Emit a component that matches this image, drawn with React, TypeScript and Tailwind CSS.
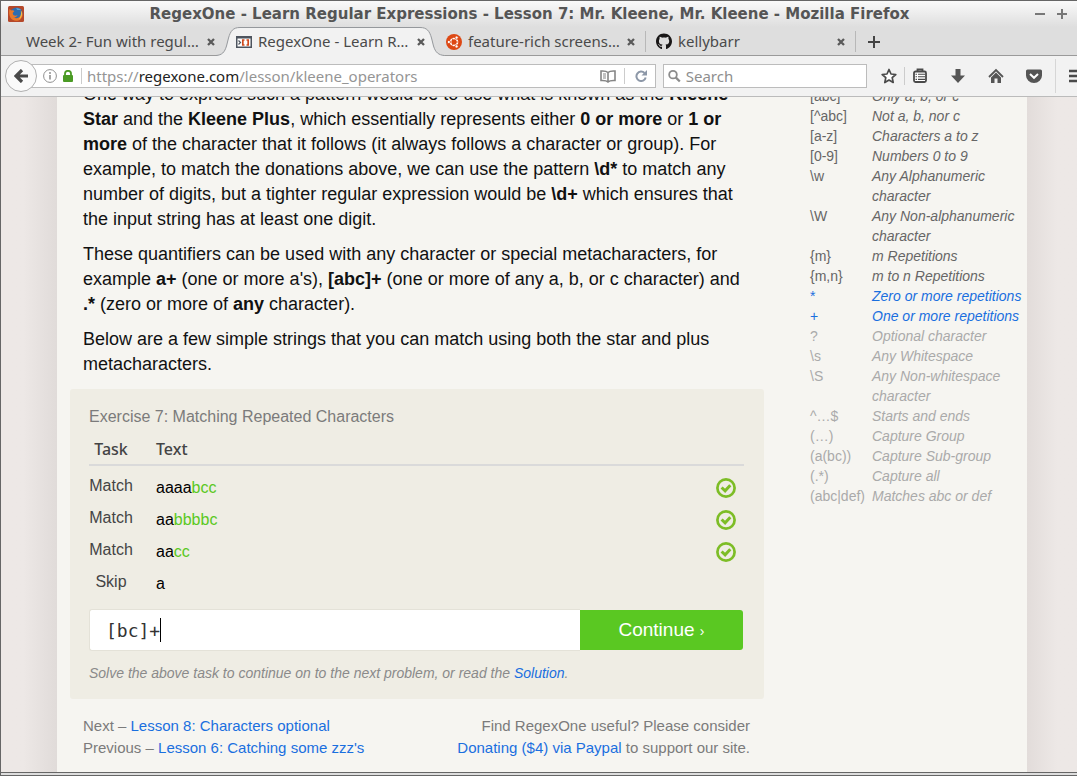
import React from "react";
import { FaGithub } from "react-icons/fa";

const UI_FONT = "font-['Noto_Sans',sans-serif]";

function FirefoxIcon() {
  return (
    <svg width="16" height="16" viewBox="0 0 16 16" aria-hidden="true">
      <rect width="16" height="16" rx="1.5" fill="#b5482a" />
      <circle cx="8.5" cy="7.5" r="6" fill="#2d6db0" />
      <path d="M8 2.5c2-.8 4 0 5 1.5-1.500-.3-2.500.4-3.500-.1z" fill="#58a6d8" />
      <path
        d="M1.500 3c.8.300 1.300.900 1.600 1.500 1.200-.5 2.400-.3 3.200.500-.3 1.200-1.800 1.200-1.500 2.800.3 2 3 2.400 4.800 1.300-1 2.600-3.200 2.500-4.400 2 2 1.800 6.200 1.300 7.600-1.900.6-1.700.5-3.200 0-4.700C15.500 7 15 11 12.500 13.200 9 16 4 14.800 2.200 11.200 1 8.800.8 5.500 1.500 3z"
        fill="#e9792a"
      />
      <path d="M12.800 4.500c2.200 3 1.200 7-1.800 9 1.500-2.500 2.500-5 1.800-9z" fill="#f6c04a" />
    </svg>
  );
}

function RegexOneIcon() {
  return (
    <svg width="16" height="12" viewBox="0 0 16 12" aria-hidden="true">
      <rect x="0.75" y="0.75" width="14.5" height="10.5" fill="#fff" stroke="#4d545e" strokeWidth="1.500" />
      <rect width="16" height="2.500" fill="#4d545e" />
      <path d="M2.500 4.500l2 2-2 2" fill="none" stroke="#4d545e" strokeWidth="1.200" />
      <path d="M8.500 4H6.800v5h1.700M10.500 4h1.700v5h-1.700" fill="none" stroke="#d04a1c" strokeWidth="1.700" />
    </svg>
  );
}

function UbuntuIcon() {
  return (
    <svg width="16" height="16" viewBox="0 0 16 16" aria-hidden="true">
      <circle cx="8" cy="8" r="8" fill="#dd4814" />
      <circle cx="8" cy="8" r="3.500" fill="none" stroke="#fff" strokeWidth="1.700" />
      <g stroke="#dd4814" strokeWidth="0.800" fill="#fff">
        <circle cx="2.900" cy="8" r="1.600" />
        <circle cx="10.600" cy="3.600" r="1.600" />
        <circle cx="10.600" cy="12.400" r="1.600" />
      </g>
      <path d="M9.600 8h3M7.200 6.600l-1.500-2.600M7.200 9.400l-1.500 2.600" stroke="#dd4814" strokeWidth="0.800" />
    </svg>
  );
}

function CloseIcon() {
  return (
    <svg width="10" height="10" viewBox="0 0 10 10" aria-hidden="true">
      <path d="M2 2l6 6M8 2l-6 6" stroke="#5a5a5a" strokeWidth="2.300" />
    </svg>
  );
}

function CheckIcon() {
  return (
    <svg width="20" height="20" viewBox="0 0 20 20" role="img" aria-label="Passed">
      <circle cx="10" cy="10" r="8.600" fill="none" stroke="#7dbd26" strokeWidth="2.700" />
      <path d="M5.600 9.500l3.500 3.300 5.200-5.500" fill="none" stroke="#7dbd26" strokeWidth="3" />
    </svg>
  );
}

function Tab({
  label,
  icon,
  active,
  divider,
}: {
  label: string;
  icon?: React.ReactNode;
  active?: boolean;
  divider?: boolean;
}) {
  return (
    <div
      role="tab"
      aria-selected={!!active}
      className={
        active
          ? "relative z-10 flex h-[29px] w-[210px] shrink-0 items-center px-[10px]"
          : "relative flex h-[29px] w-[210px] shrink-0 items-center px-[10px]"
      }
    >
      {active && (
        <svg className="absolute -left-[10px] top-0" width="232" height="29" viewBox="0 0 232 29" aria-hidden="true">
          <path
            d="M0 28.500C6 28 8.500 25.500 10.500 19L12.500 11C14.500 4 17 .5 24 .5H204c7 0 9.500 3.500 11.500 10.500l2 8c2 6.500 5 9 11 9.500V29H0z"
            fill="#f2f2f2"
          />
          <path
            d="M0 28.500C6 28 8.500 25.500 10.500 19L12.500 11C14.500 4 17 .5 24 .5H204c7 0 9.500 3.500 11.500 10.500l2 8c2 6.500 5 9 11 9.500"
            fill="none"
            stroke="#95989c"
          />
        </svg>
      )}
      {icon && <span className="relative mr-[6px] flex w-4 shrink-0 justify-center">{icon}</span>}
      <span className="relative flex-1 whitespace-nowrap text-[15px] text-[#4a4a4a]">{label}</span>
      <button aria-label={"Close " + label} className="relative">
        <CloseIcon />
      </button>
      {divider && <span className="absolute right-0 top-[4px] h-[21px] w-px bg-[#b8b8b8]" />}
    </div>
  );
}

function BrowserChrome() {
  return (
    <header className={"shrink-0 " + UI_FONT}>
      <div className="flex h-[26px] items-center bg-linear-to-b from-[#fafafa] to-[#dedede] pl-[7px] pr-[10px]">
        <FirefoxIcon />
        <h1 className="flex-1 whitespace-nowrap text-center font-['DejaVu_Sans',sans-serif] text-[15px] font-bold text-[#555]">
          RegexOne - Learn Regular Expressions - Lesson 7: Mr. Kleene, Mr. Kleene - Mozilla Firefox
        </h1>
        <div className="flex gap-3">
          <button aria-label="Minimize">
            <svg width="10" height="10" viewBox="0 0 10 10" aria-hidden="true">
              <path d="M0 5h10" stroke="#777" strokeWidth="2" />
            </svg>
          </button>
          <button aria-label="Maximize">
            <svg width="10" height="10" viewBox="0 0 10 10" aria-hidden="true">
              <path d="M0 5h10M5 0v10" stroke="#777" strokeWidth="2" />
            </svg>
          </button>
        </div>
      </div>

      <div className="border-b border-[#9a9a9a] bg-[#dedede]">
        <div role="tablist" className="-mb-px flex pl-[15px]">
          <Tab label="Week 2- Fun with regul…" />
          <Tab label="RegexOne - Learn R…" icon={<RegexOneIcon />} active />
          <Tab label="feature-rich screens…" icon={<UbuntuIcon />} divider />
          <Tab label="kellybarr" icon={<FaGithub size={17} color="#191717" />} divider />
          <button aria-label="New tab" className="px-3">
            <svg width="12" height="12" viewBox="0 0 12 12" aria-hidden="true">
              <path d="M0 6h12M6 0v12" stroke="#444" strokeWidth="2" />
            </svg>
          </button>
        </div>
      </div>

      <div className="flex h-[41px] items-center border-b border-[#bbb] bg-[#f2f2f2] pl-1">
        <button
          aria-label="Back"
          className="relative z-10 flex size-8 shrink-0 items-center justify-center rounded-full border border-[#b0b0b0] bg-[#fafafa]"
        >
          <svg width="14" height="14" viewBox="0 0 14 14" aria-hidden="true">
            <path d="M8 1L2 7l6 6M2.500 7H14" fill="none" stroke="#4a4a4a" strokeWidth="3.200" />
          </svg>
        </button>
        <div className="-ml-2 flex h-6 flex-1 items-center border border-[#bcbcbc] bg-white pl-[13px] pr-2">
          <svg width="14" height="14" viewBox="0 0 14 14" aria-hidden="true">
            <circle cx="7" cy="7" r="6.400" fill="none" stroke="#909090" />
            <path d="M7 6v4.500" stroke="#909090" strokeWidth="1.600" />
            <circle cx="7" cy="3.900" r="1" fill="#909090" />
          </svg>
          <svg className="ml-[6px]" width="10" height="12" viewBox="0 0 10 12" aria-hidden="true">
            <rect y="5" width="10" height="7" rx="1" fill="#4b9b25" />
            <path d="M2 6V3.800a3 3 0 0 1 6 0V6" fill="none" stroke="#4b9b25" strokeWidth="1.800" />
          </svg>
          <span className="mx-[5px] ml-2 h-4 w-px bg-[#ccc]" />
          <div
            role="textbox"
            aria-label="Address"
            contentEditable
            suppressContentEditableWarning
            className="flex-1 whitespace-nowrap text-[15px] text-[#959595]"
          >
            https://<span className="text-[#222]">regexone.com</span>/lesson/kleene_operators
          </div>
          <button aria-label="Reader view">
            <svg width="16" height="13" viewBox="0 0 16 13" aria-hidden="true">
              <path
                d="M8 2.500C6.500 1 4 .8 1 1v9.500c3-.2 5.500 0 7 1.500 1.500-1.500 4-1.700 7-1.500V1c-3-.2-5.500 0-7 1.500zM8 2.500V12"
                fill="none"
                stroke="#858585"
                strokeWidth="1.600"
              />
              <path d="M3 4h3M3 6h3M3 8h3" stroke="#858585" />
            </svg>
          </button>
          <span className="mx-2 h-4 w-px bg-[#ccc]" />
          <button aria-label="Reload" className="pl-[2px]">
            <svg width="12" height="12" viewBox="0 0 12 12" aria-hidden="true">
              <path d="M9.500 3A4.700 4.700 0 1 0 10.700 7.500" fill="none" stroke="#8d98a8" strokeWidth="2" />
              <path d="M12 0v5.500H6.500z" fill="#8d98a8" />
            </svg>
          </button>
        </div>
        <label className="ml-[7px] flex h-6 w-[204px] shrink-0 items-center gap-[5px] border border-[#bcbcbc] bg-white px-1">
          <svg width="14" height="14" viewBox="0 0 14 14" aria-hidden="true">
            <circle cx="5.500" cy="5.500" r="4.200" fill="none" stroke="#8c8c8c" strokeWidth="2" />
            <path d="M8.500 8.500l4.500 4.500" stroke="#8c8c8c" strokeWidth="2.500" />
          </svg>
          <input
            aria-label="Search"
            placeholder="Search"
            className="w-full text-[15px] outline-none placeholder:text-[#8e8e8e]"
          />
        </label>
        <div className="flex shrink-0 items-center pl-[14px]">
          <button aria-label="Bookmark this page">
            <svg width="16" height="16" viewBox="0 0 16 16" aria-hidden="true">
              <path
                d="M8 1.500l2 4.500 4.800.5-3.600 3.200 1 4.800L8 12l-4.200 2.500 1-4.800L1.200 6.500 6 6z"
                fill="#fff"
                stroke="#4a4a4a"
                strokeWidth="1.700"
                strokeLinejoin="round"
              />
            </svg>
          </button>
          <span className="mx-[7px] h-[18px] w-px bg-[#ccc]" />
          <div className="flex items-center gap-[22px]">
            <button aria-label="Bookmarks">
              <svg width="16" height="16" viewBox="0 0 16 16" aria-hidden="true">
                <path d="M5.500 3V1.500h5V3" fill="none" stroke="#4a4a4a" strokeWidth="1.800" />
                <rect x="2" y="3.500" width="12" height="10.500" rx="1.500" fill="#fff" stroke="#4a4a4a" strokeWidth="1.800" />
                <path d="M3.500 6.200h1.500M3.500 8.800h1.500M3.500 11.400h1.500M6 6.200h7M6 8.800h7M6 11.400h7" stroke="#4a4a4a" strokeWidth="1.100" />
              </svg>
            </button>
            <button aria-label="Downloads">
              <svg width="16" height="16" viewBox="0 0 16 16" aria-hidden="true">
                <path d="M5.500 1h5v6.500H15L8 15 1 7.500h4.500z" fill="#555" />
              </svg>
            </button>
            <button aria-label="Home">
              <svg width="16" height="16" viewBox="0 0 16 16" aria-hidden="true">
                <path d="M1 9l7-7 7 7" fill="none" stroke="#555" strokeWidth="1.800" />
                <path d="M3 9.600L8 4.600l5 5V15H9.500v-4.500h-3V15H3z" fill="#555" />
              </svg>
            </button>
            <button aria-label="Save to Pocket">
              <svg width="16" height="16" viewBox="0 0 16 16" aria-hidden="true">
                <path d="M1.500 1.500h13A1.500 1.500 0 0 1 16 3v4.500a8 7.500 0 0 1-16 0V3a1.500 1.500 0 0 1 1.500-1.500z" fill="#555" />
                <path d="M4 6l4 3.800L12 6" fill="none" stroke="#fff" strokeWidth="2" />
              </svg>
            </button>
          </div>
          <span className="ml-[13px] mr-[13px] h-[34px] w-px bg-[#d6d6d6]" />
          <button aria-label="Open menu">
            <svg width="8" height="14" viewBox="0 0 8 14" aria-hidden="true">
              <path d="M0 2h8M0 7h8M0 12h8" stroke="#4a4a4a" strokeWidth="2.500" />
            </svg>
          </button>
        </div>
      </div>
    </header>
  );
}

function Lesson() {
  return (
    <article className="flex flex-col gap-[10px] px-[13px] text-[18px] leading-[25px] text-[#111]">
      <p className="whitespace-nowrap">
        One way to express such a pattern would be to use what is known as the <b>Kleene</b>
        <br />
        <b>Star</b> and the <b>Kleene Plus</b>, which essentially represents either <b>0 or more</b> or <b>1 or</b>
        <br />
        <b>more</b> of the character that it follows (it always follows a character or group). For
        <br />
        example, to match the donations above, we can use the pattern <b>\d*</b> to match any
        <br />
        number of digits, but a tighter regular expression would be <b>\d+</b> which ensures that
        <br />
        the input string has at least one digit.
      </p>
      <p className="whitespace-nowrap">
        These quantifiers can be used with any character or special metacharacters, for
        <br />
        example <b>a+</b> (one or more a's), <b>[abc]+</b> (one or more of any a, b, or c character) and
        <br />
        <b>.*</b> (zero or more of <b>any</b> character).
      </p>
      <p className="whitespace-nowrap">
        Below are a few simple strings that you can match using both the star and plus
        <br />
        metacharacters.
      </p>
    </article>
  );
}

const TASKS = [
  { task: "Match", plain: "aaaa", hit: "bcc", done: true },
  { task: "Match", plain: "aa", hit: "bbbbc", done: true },
  { task: "Match", plain: "aa", hit: "cc", done: true },
  { task: "Skip", plain: "a", hit: "", done: false },
];

function Exercise() {
  return (
    <section className="mt-3 rounded-[3px] bg-[#efede4] pl-[19px] pr-5 pt-4 pb-[15px] text-[16px]">
      <h2 className="leading-6 text-[#7b7b7b]">Exercise 7: Matching Repeated Characters</h2>
      <table className="w-full border-collapse">
        <thead>
          <tr className="h-9 border-b-2 border-[#dadada] font-['Noto_Sans',sans-serif] leading-6 text-[#444]">
            <th className="w-[44px] p-0 pt-1 text-center font-medium">Task</th>
            <th className="p-0 pl-[23px] pt-1 text-left font-medium">Text</th>
            <th aria-label="Result" />
          </tr>
        </thead>
        <tbody>
          <tr aria-hidden="true" className="h-[7px]" />
          {TASKS.map((t, i) => (
            <tr key={i} className="h-8">
              <td className="p-0 pb-1 text-center leading-6 text-[#444]">{t.task}</td>
              <td className="p-0 pl-[23px] text-black">
                {t.plain}
                <span className="text-[#5ac822]">{t.hit}</span>
              </td>
              <td className="p-0 pr-2">
                <span className="flex justify-end">{t.done && <CheckIcon />}</span>
              </td>
            </tr>
          ))}
        </tbody>
      </table>
      <form className="mt-[9px] flex h-[42px] pr-px" onSubmit={(e) => e.preventDefault()}>
        <label className="flex flex-1 items-center rounded-l-[3px] border border-r-0 border-[#e4e2d8] bg-white pl-4">
          <input
            aria-label="Regular expression"
            defaultValue="[bc]+"
            className="field-sizing-content font-['DejaVu_Sans_Mono',monospace] text-[18px] text-[#333] caret-transparent outline-none"
          />
          <span className="h-6 w-px bg-black" />
        </label>
        <button className="my-px w-[163px] rounded-r-[3px] bg-[#5ac822] text-[19px] text-white">
          Continue <span className="text-[14px]">›</span>
        </button>
      </form>
      <p className="mt-[11px] whitespace-nowrap text-[14px] italic leading-[22px] text-[#8a8a8a]">
        Solve the above task to continue on to the next problem, or read the{" "}
        <a href="#solution" className="text-[#1a6fdf]">
          Solution
        </a>
        .
      </p>
    </section>
  );
}

function LessonLinks() {
  return (
    <footer className="mt-4 flex justify-between whitespace-nowrap pl-[13px] pr-[14px] text-[15px] leading-[22px] text-[#7b7b7b]">
      <p>
        Next –{" "}
        <a href="#lesson-8" className="text-[#1a6fdf]">
          Lesson 8: Characters optional
        </a>
        <br />
        Previous –{" "}
        <a href="#lesson-6" className="text-[#1a6fdf]">
          Lesson 6: Catching some zzz's
        </a>
      </p>
      <p className="text-right">
        Find RegexOne useful? Please consider
        <br />
        <a href="#donate" className="text-[#1a6fdf]">
          Donating ($4) via Paypal
        </a>{" "}
        to support our site.
      </p>
    </footer>
  );
}

const NOTES: { tone: string; rows: [string, string][] }[] = [
  {
    tone: "text-[#666]",
    rows: [
      ["[abc]", "Only a, b, or c"],
      ["[^abc]", "Not a, b, nor c"],
      ["[a-z]", "Characters a to z"],
      ["[0-9]", "Numbers 0 to 9"],
      ["\\w", "Any Alphanumeric\ncharacter"],
      ["\\W", "Any Non-alphanumeric\ncharacter"],
      ["{m}", "m Repetitions"],
      ["{m,n}", "m to n Repetitions"],
    ],
  },
  {
    tone: "text-[#1a6fdf]",
    rows: [
      ["*", "Zero or more repetitions"],
      ["+", "One or more repetitions"],
    ],
  },
  {
    tone: "text-[#aaa]",
    rows: [
      ["?", "Optional character"],
      ["\\s", "Any Whitespace"],
      ["\\S", "Any Non-whitespace\ncharacter"],
      ["^…$", "Starts and ends"],
      ["(…)", "Capture Group"],
      ["(a(bc))", "Capture Sub-group"],
      ["(.*)", "Capture all"],
      ["(abc|def)", "Matches abc or def"],
    ],
  },
];

function LessonNotes() {
  return (
    <aside className="w-[217px] shrink-0 pt-[4px]">
      <table className="border-collapse text-[14px] leading-5">
        {NOTES.map((group) => (
          <tbody key={group.tone} className={group.tone}>
            {group.rows.map(([pattern, meaning]) => (
              <tr key={pattern} className="align-top">
                <td className="w-[62px] min-w-[62px] whitespace-nowrap p-0">{pattern}</td>
                <td className="whitespace-pre p-0 italic">{meaning}</td>
              </tr>
            ))}
          </tbody>
        ))}
      </table>
    </aside>
  );
}

export default function App() {
  return (
    <div className="flex h-screen flex-col overflow-hidden border-l border-t border-[#666] bg-[#f6f5f1] font-['Liberation_Sans',Arial,sans-serif]">
      <BrowserChrome />
      <div className="flex min-h-0 flex-1 overflow-hidden">
        <div className="w-14 shrink-0 bg-linear-to-r from-[#ede8e6] from-40% to-[#e0dbd9]" />
        <main className="flex min-w-0 flex-1">
          <div className="-mt-[15px] flex min-w-0 flex-1 pl-[13px]">
            <div className="min-w-0 flex-1">
              <Lesson />
              <Exercise />
              <LessonLinks />
            </div>
            <div className="w-[46px] shrink-0" />
            <LessonNotes />
          </div>
        </main>
        <div className="w-[50px] shrink-0 bg-linear-to-r from-[#e2dcda] to-[#ede8e6] to-60%" />
      </div>
      <div className="h-1 shrink-0 border-y border-[#666] bg-[#ddd]" />
    </div>
  );
}
